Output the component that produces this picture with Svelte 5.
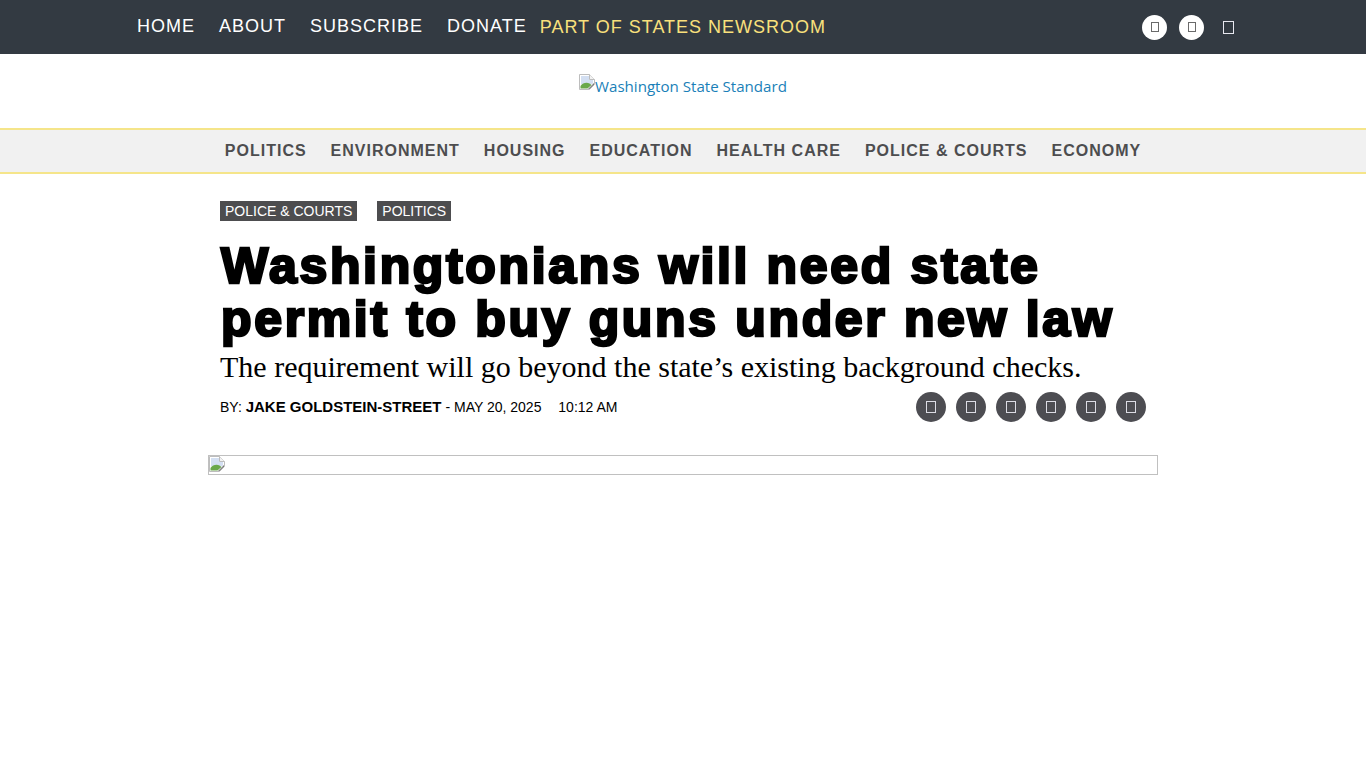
<script lang="ts">
  const topLinks = ["HOME", "ABOUT", "SUBSCRIBE", "DONATE"];
  const sections = ["POLITICS", "ENVIRONMENT", "HOUSING", "EDUCATION", "HEALTH CARE", "POLICE & COURTS", "ECONOMY"];
  const tags = ["POLICE & COURTS", "POLITICS"];
  const shares = [1, 2, 3, 4, 5, 6];
</script>

{#snippet broken()}
  <svg class="broken" width="16" height="16" viewBox="0 0 16 16">
    <path d="M.5.5h10l5 5v5l-5 5H.5z" fill="#fff" stroke="#bdbdbd" />
    <path d="M10.5.5v5h5" fill="#f2f2f2" stroke="#bdbdbd" />
    <path d="M2 2h8v4h4v3.5L9 12 2 10z" fill="#d3dff2" />
    <path d="M1.5 14.5V12c2-3 6-4 9-2.500l2 1.500-4 3.500z" fill="#6aa84a" />
    <path d="M9 15l6-6v1.500L10.500 15z" fill="#777" />
  </svg>
{/snippet}

<header class="topbar">
  <nav class="toplinks">
    {#each topLinks as link}
      <a href="#top">{link}</a>
    {/each}
  </nav>
  <span class="newsroom">PART OF STATES NEWSROOM</span>
  <div class="topicons">
    <span class="circle"><i class="tofu dark"></i></span>
    <span class="circle"><i class="tofu dark"></i></span>
    <span class="plain"><i class="tofu"></i></span>
  </div>
</header>

<div class="logo">
  <a href="#top">{@render broken()}<span>Washington State Standard</span></a>
</div>

<nav class="sections">
  {#each sections as section}
    <a href="#top">{section}</a>
  {/each}
</nav>

<main class="article">
  <div class="tags">
    {#each tags as tag}
      <a href="#top">{tag}</a>
    {/each}
  </div>
  <h1>Washingtonians will need state permit to buy guns under new law</h1>
  <h2>The requirement will go beyond the state’s existing background checks.</h2>
  <div class="meta">
    <p>BY: <b>JAKE GOLDSTEIN-STREET</b> - MAY 20, 2025 <span class="time">10:12 AM</span></p>
    <div class="shares">
      {#each shares as share (share)}
        <span class="share"><i class="tofu"></i></span>
      {/each}
    </div>
  </div>
  <div class="photo">{@render broken()}</div>
</main>

<style>
  :global(body) {
    background: #fff;
    font-family: "Liberation Sans", Arial, sans-serif;
  }
  a {
    text-decoration: none;
    color: inherit;
  }
  .topbar {
    display: flex;
    align-items: center;
    height: 54px;
    padding-left: 137px;
    background: #333a42;
    color: #fff;
  }
  .toplinks {
    display: flex;
    gap: 24px;
    font-size: 18px;
    letter-spacing: 1px;
    margin-top: -2px;
  }
  .newsroom {
    margin-left: 13px;
    font-size: 18px;
    letter-spacing: 1px;
    color: #f9e07c;
    margin-top: 1px;
  }
  .topicons {
    display: flex;
    align-items: center;
    gap: 12px;
    margin-left: auto;
    margin-right: 125px;
  }
  .circle, .plain {
    display: flex;
    align-items: center;
    justify-content: center;
    width: 25px;
    height: 25px;
    border-radius: 50%;
  }
  .circle {
    background: #fff;
  }
  .tofu {
    display: block;
    box-sizing: border-box;
    width: 10px;
    height: 12px;
    border: 1px solid #dcdce4;
  }
  .tofu.dark {
    width: 8px;
    height: 10px;
    border-color: #6a6a6a;
  }
  .plain .tofu {
    width: 11px;
    height: 13px;
    border-color: #e8e8f0;
  }
  .logo {
    display: flex;
    justify-content: center;
    height: 74px;
    padding-top: 20px;
    box-sizing: border-box;
  }
  .logo a {
    display: flex;
    align-items: flex-start;
    height: 24px;
    font-family: "Open Sans", sans-serif;
    font-size: 15.1px;
    color: #1a7fb8;
  }
  .logo span {
    margin-top: 2px;
  }
  .sections {
    display: flex;
    justify-content: center;
    gap: 24px;
    height: 42px;
    align-items: center;
    background: #f1f1f1;
    border-top: 2px solid #f5e58a;
    border-bottom: 2px solid #f5e58a;
    font-size: 16px;
    font-weight: 700;
    letter-spacing: 1px;
    color: #4d4d4f;
  }
  .article {
    width: 950px;
    margin: 0 auto;
    padding-top: 27px;
  }
  .tags {
    display: flex;
    gap: 20px;
    padding-left: 12px;
  }
  .tags a {
    padding: 0 5px;
    height: 20px;
    line-height: 20px;
    font-size: 14px;
    background: #4d4d4f;
    color: #fff;
  }
  h1 {
    margin: 19px 0 0;
    padding-left: 13px;
    width: 925px;
    font-size: 50px;
    line-height: 53px;
    font-weight: 700;
    letter-spacing: 2.65px;
    color: #000;
    -webkit-text-stroke: 2.6px #000;
  }
  h2 {
    margin: 3px 0 0;
    padding-left: 12px;
    font-family: "Liberation Serif", serif;
    font-size: 30px;
    line-height: 36px;
    font-weight: 400;
    color: #000;
  }
  .meta {
    display: flex;
    align-items: center;
    justify-content: space-between;
    margin-top: 7px;
    padding: 0 12px;
    height: 30px;
  }
  .meta p {
    margin: -2px 0 0;
    font-size: 14px;
    color: #000;
  }
  .meta b {
    font-size: 15px;
  }
  .time {
    margin-left: 13px;
  }
  .shares {
    display: flex;
    gap: 10px;
  }
  .share {
    display: flex;
    align-items: center;
    justify-content: center;
    width: 30px;
    height: 30px;
    border-radius: 50%;
    background: #4d4d52;
  }
  .photo {
    display: flex;
    height: 20px;
    margin-top: 33px;
    box-sizing: border-box;
    border: 1px solid #c0c0c0;
  }
  .broken {
    flex: none;
  }
</style>
